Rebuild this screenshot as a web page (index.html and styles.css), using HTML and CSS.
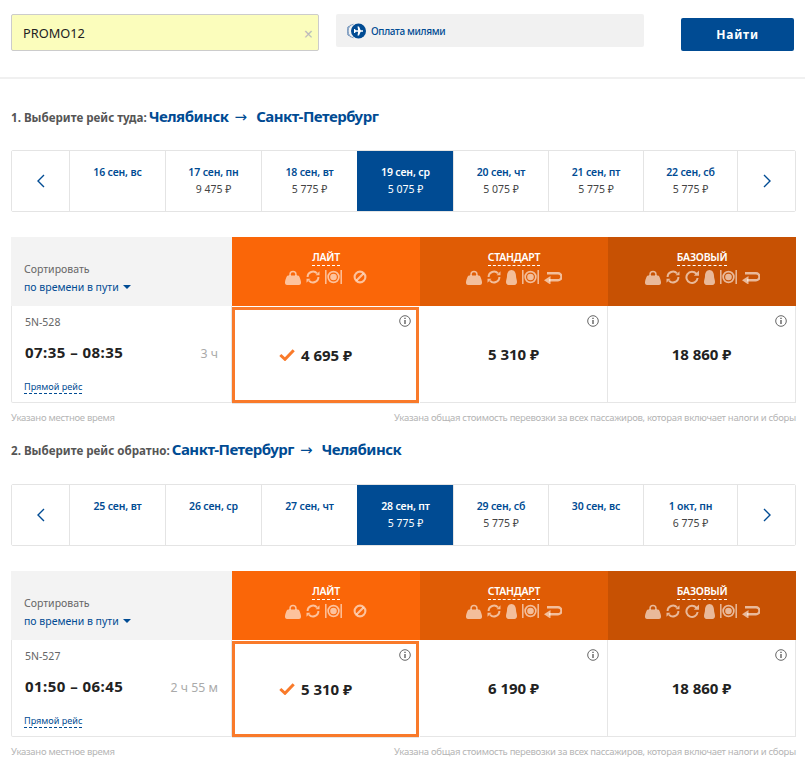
FILE: index.html
```html
<!DOCTYPE html>
<html lang="ru">
<head>
<meta charset="utf-8">
<title>Выбор рейса</title>
<link rel="stylesheet" href="styles.css">
</head>
<body>
<svg class="defs" width="0" height="0" aria-hidden="true">
  <symbol id="bag" viewBox="0 0 16 15"><path d="M4.300 6V4.500a3.700 3.700 0 0 1 7.400 0V6h-1.500V4.500a2.200 2.200 0 0 0-4.400 0V6z" fill="currentColor"/><path d="M3 5.500h10c1.300 0 2.500 3.500 3 6.500 .2 1.500-.5 3-2 3H2c-1.500 0-2.200-1.500-2-3 .5-3 1.700-6.500 3-6.500z" fill="currentColor"/></symbol>
  <symbol id="swap" viewBox="0 0 14 14"><path d="M1.600 7a5.400 5.400 0 0 1 9.400-3.600M12.400 7a5.400 5.400 0 0 1-9.400 3.600" fill="none" stroke="currentColor" stroke-width="2"/><path d="M9.500 5.200H13.500V1.200zM4.500 8.800H.5v4z" fill="currentColor"/></symbol>
  <symbol id="redo" viewBox="0 0 14 14"><path d="M11.300 3.700A5.600 5.600 0 1 0 12.600 8" fill="none" stroke="currentColor" stroke-width="2"/><path d="M8.800 5.800H14V.6z" fill="currentColor"/></symbol>
  <symbol id="meal" viewBox="0 0 17 14"><path d="M8.500 .8a6.200 6.200 0 1 1 0 12.400 6.200 6.200 0 0 1 0-12.400zm0 1.700a4.500 4.500 0 1 0 0 9 4.500 4.500 0 0 0 0-9z" fill="currentColor"/><circle cx="8.500" cy="7" r="3.300" fill="currentColor"/><path d="M.8 0v14M16.200 0v14" stroke="currentColor" stroke-width="1.500"/></symbol>
  <symbol id="none" viewBox="0 0 14 14"><circle cx="7" cy="7" r="5.400" fill="none" stroke="currentColor" stroke-width="2.100"/><path d="M3.500 10.500l7-7" stroke="currentColor" stroke-width="2.100"/></symbol>
  <symbol id="seat" viewBox="0 0 11 15"><path d="M5.500 0c2.900 0 4.500 2.800 4.500 6 0 2.300 1 3.800 1 6 0 1.600-1 3-2.500 3h-6C1 15 0 13.600 0 12c0-2.200 1-3.700 1-6 0-3.200 1.600-6 4.500-6z" fill="currentColor"/></symbol>
  <symbol id="back" viewBox="0 0 18 13"><path d="M5 9.300h9a3.200 3.200 0 0 0 0-7H3" fill="none" stroke="currentColor" stroke-width="2.400"/><path d="M6.500 5v8.600L0 9.300z" fill="currentColor"/></symbol>
  <symbol id="info" viewBox="0 0 12 12"><circle cx="6" cy="6" r="5.300" fill="none" stroke="#666" stroke-width="1"/><path d="M6 5v4M6 2.700v1.300" stroke="#555" stroke-width="1.300"/></symbol>
  <symbol id="check" viewBox="0 0 16 12"><path d="M1.300 6l4.700 4.300L14.700 1.300" fill="none" stroke="#f97a2a" stroke-width="3"/></symbol>
</svg>

<header class="search">
  <div class="promo"><span class="promo-code">PROMO12</span><span class="promo-clear">×</span></div>
  <div class="miles">
    <svg class="miles-icon" viewBox="0 0 19 16" width="19" height="16"><path d="M6.500 1.200a7 7 0 0 0 0 13.600M4 1.800a7 7 0 0 0 0 12.400M1.800 3a7 7 0 0 0 0 10" fill="none" stroke="#7d9cc0" stroke-width="1"/><circle cx="11.500" cy="8" r="7.500" fill="#004b93"/><path d="M7 8h9" stroke="#fff" stroke-width="1.500"/><path d="M10.500 3.500h1.500l2 4.500-2 4.500h-1.500l.8-4.500zM7 6h1l1 2-1 2H7z" fill="#fff"/></svg>
    <span>Оплата милями</span>
  </div>
  <button class="find" type="button">Найти</button>
</header>

<main>
  <section class="leg">
    <h2 class="leg-title"><span class="leg-step">1. Выберите рейс туда:</span> <span class="leg-route">Челябинск<span class="arrow">→</span>Санкт-Петербург</span></h2>
    <div class="dates">
      <button class="nav" type="button"><svg viewBox="0 0 10 16" width="10" height="16"><path d="M8 2L2 8l6 6" fill="none" stroke="#004b93" stroke-width="1.400"/></svg></button>
      <div class="date"><b>16 сен, вс</b></div>
      <div class="date"><b>17 сен, пн</b><span>9 475 ₽</span></div>
      <div class="date"><b>18 сен, вт</b><span>5 775 ₽</span></div>
      <div class="date date-on"><b>19 сен, ср</b><span>5 075 ₽</span></div>
      <div class="date"><b>20 сен, чт</b><span>5 075 ₽</span></div>
      <div class="date"><b>21 сен, пт</b><span>5 775 ₽</span></div>
      <div class="date"><b>22 сен, сб</b><span>5 775 ₽</span></div>
      <button class="nav" type="button"><svg viewBox="0 0 10 16" width="10" height="16"><path d="M2 2l6 6-6 6" fill="none" stroke="#004b93" stroke-width="1.400"/></svg></button>
    </div>
    <div class="fares">
      <div class="sort"><span>Сортировать</span><a>по времени в пути <i class="caret"></i></a></div>
      <div class="tariff t1"><u>ЛАЙТ</u><div class="icons"><svg class="i16"><use href="#bag"/></svg><svg class="i14"><use href="#swap"/></svg><svg class="i17"><use href="#meal"/></svg><svg class="i14 gap"><use href="#none"/></svg></div></div>
      <div class="tariff t2"><u>СТАНДАРТ</u><div class="icons"><svg class="i16"><use href="#bag"/></svg><svg class="i14"><use href="#swap"/></svg><svg class="i11"><use href="#seat"/></svg><svg class="i17"><use href="#meal"/></svg><svg class="i18"><use href="#back"/></svg></div></div>
      <div class="tariff t3"><u>БАЗОВЫЙ</u><div class="icons"><svg class="i16"><use href="#bag"/></svg><svg class="i14"><use href="#swap"/></svg><svg class="i14"><use href="#redo"/></svg><svg class="i11"><use href="#seat"/></svg><svg class="i17"><use href="#meal"/></svg><svg class="i18"><use href="#back"/></svg></div></div>
      <div class="flight">
        <div class="flight-no">5N-528</div>
        <div class="flight-time"><b>07:35 – 08:35</b><span>3 ч</span></div>
        <a class="flight-type">Прямой рейс</a>
      </div>
      <div class="price price-on"><svg class="info"><use href="#info"/></svg><svg class="check"><use href="#check"/></svg><b>4 695 ₽</b></div>
      <div class="price"><svg class="info"><use href="#info"/></svg><b>5 310 ₽</b></div>
      <div class="price"><svg class="info"><use href="#info"/></svg><b>18 860 ₽</b></div>
    </div>
    <div class="notes"><span>Указано местное время</span><span>Указана общая стоимость перевозки за всех пассажиров, которая включает налоги и сборы</span></div>
  </section>

  <section class="leg">
    <h2 class="leg-title"><span class="leg-step">2. Выберите рейс обратно:</span> <span class="leg-route">Санкт-Петербург<span class="arrow">→</span>Челябинск</span></h2>
    <div class="dates">
      <button class="nav" type="button"><svg viewBox="0 0 10 16" width="10" height="16"><path d="M8 2L2 8l6 6" fill="none" stroke="#004b93" stroke-width="1.400"/></svg></button>
      <div class="date"><b>25 сен, вт</b></div>
      <div class="date"><b>26 сен, ср</b></div>
      <div class="date"><b>27 сен, чт</b></div>
      <div class="date date-on"><b>28 сен, пт</b><span>5 775 ₽</span></div>
      <div class="date"><b>29 сен, сб</b><span>5 775 ₽</span></div>
      <div class="date"><b>30 сен, вс</b></div>
      <div class="date"><b>1 окт, пн</b><span>6 775 ₽</span></div>
      <button class="nav" type="button"><svg viewBox="0 0 10 16" width="10" height="16"><path d="M2 2l6 6-6 6" fill="none" stroke="#004b93" stroke-width="1.400"/></svg></button>
    </div>
    <div class="fares">
      <div class="sort"><span>Сортировать</span><a>по времени в пути <i class="caret"></i></a></div>
      <div class="tariff t1"><u>ЛАЙТ</u><div class="icons"><svg class="i16"><use href="#bag"/></svg><svg class="i14"><use href="#swap"/></svg><svg class="i17"><use href="#meal"/></svg><svg class="i14 gap"><use href="#none"/></svg></div></div>
      <div class="tariff t2"><u>СТАНДАРТ</u><div class="icons"><svg class="i16"><use href="#bag"/></svg><svg class="i14"><use href="#swap"/></svg><svg class="i11"><use href="#seat"/></svg><svg class="i17"><use href="#meal"/></svg><svg class="i18"><use href="#back"/></svg></div></div>
      <div class="tariff t3"><u>БАЗОВЫЙ</u><div class="icons"><svg class="i16"><use href="#bag"/></svg><svg class="i14"><use href="#swap"/></svg><svg class="i14"><use href="#redo"/></svg><svg class="i11"><use href="#seat"/></svg><svg class="i17"><use href="#meal"/></svg><svg class="i18"><use href="#back"/></svg></div></div>
      <div class="flight">
        <div class="flight-no">5N-527</div>
        <div class="flight-time"><b>01:50 – 06:45</b><span>2 ч 55 м</span></div>
        <a class="flight-type">Прямой рейс</a>
      </div>
      <div class="price price-on"><svg class="info"><use href="#info"/></svg><svg class="check"><use href="#check"/></svg><b>5 310 ₽</b></div>
      <div class="price"><svg class="info"><use href="#info"/></svg><b>6 190 ₽</b></div>
      <div class="price"><svg class="info"><use href="#info"/></svg><b>18 860 ₽</b></div>
    </div>
    <div class="notes"><span>Указано местное время</span><span>Указана общая стоимость перевозки за всех пассажиров, которая включает налоги и сборы</span></div>
  </section>
</main>
</body>
</html>
```
FILE: styles.css
```css
* { box-sizing: border-box; }
html, body { margin: 0; padding: 0; }
body {
  width: 805px;
  height: 768px;
  overflow: hidden;
  background: #fff;
  color: #222;
  font-family: "Noto Sans", "Open Sans", sans-serif;
  font-size: 12px;
}
.defs { position: absolute; }

.search {
  display: flex;
  align-items: flex-start;
  height: 79px;
  padding: 14px 11px 0;
  border-bottom: 2px solid #f0f0f0;
}
.promo {
  display: flex;
  align-items: center;
  justify-content: space-between;
  width: 308px;
  height: 37px;
  padding: 0 5px 0 11px;
  background: #fbfdbc;
  border: 1px solid #ccc;
  border-radius: 2px;
}
.promo-code { font-size: 12.800px; color: #222; }
.promo-clear { font-size: 16px; line-height: 1; color: #bbb; margin-top: 2px; }
.miles {
  display: flex;
  align-items: center;
  gap: 5px;
  width: 308px;
  height: 33px;
  margin-left: 17px;
  padding-left: 11px;
  background: #f1f1f1;
  border-radius: 2px;
  font-size: 10px;
  font-weight: 500;
  letter-spacing: -.35px;
  color: #004b93;
}
.miles-icon { flex: none; }
.find {
  width: 113px;
  height: 33px;
  margin: 4px 0 0 37px;
  border: 0;
  border-radius: 2px;
  background: #004b93;
  color: #fff;
  font: 700 12px "Noto Sans", sans-serif;
  letter-spacing: .8px;
}

.leg { padding: 0 9px 0 11px; }
.leg-title {
  display: flex;
  align-items: baseline;
  gap: 2px;
  height: 71px;
  margin: 0;
  padding-top: 27px;
  font-weight: 400;
}
main > .leg:last-child .leg-title { height: 36px; padding-top: 0; margin-top: 12px; }
main > .leg:last-child .dates { margin-top: 9px; }
.leg-step { font-size: 11.600px; font-weight: 700; color: #555; }
.leg-route { font-size: 15px; font-weight: 700; letter-spacing: -.5px; color: #004b93; white-space: nowrap; }
.arrow { margin: 0 9px 0 6px; font-family: "DejaVu Sans", sans-serif; font-weight: 400; letter-spacing: 0; }

.dates {
  display: flex;
  height: 62px;
  border: 1px solid #e4e4e4;
  border-radius: 2px;
}
.nav {
  flex: 1 1 0;
  display: flex;
  align-items: center;
  justify-content: center;
  padding: 0;
  border: 0;
  background: #fff;
}
.nav:first-child { flex: 0 0 57px; }
.date {
  flex: 0 0 96px;
  display: flex;
  flex-direction: column;
  align-items: center;
  gap: 3px;
  padding-top: 14px;
  border-left: 1px solid #e4e4e4;
  font-size: 10.500px;
  color: #444;
}
.date:nth-child(n+6) { flex-basis: 95px; }
.date:nth-child(8) { flex-basis: 94px; }
.date + .nav { border-left: 1px solid #e4e4e4; }
.date b { font-weight: 600; letter-spacing: -.15px; color: #004b93; }
.date-on { background: #004b93; border-color: #004b93; color: #fff; }
.date-on b { color: #fff; }

.fares {
  display: grid;
  grid-template-columns: 221px 188px 188px 188px;
  grid-template-rows: 69px 97px;
  margin-top: 25px;
  border-radius: 2px;
}
.sort {
  display: flex;
  flex-direction: column;
  justify-content: flex-end;
  gap: 4px;
  padding: 0 0 12px 13px;
  background: #f3f3f3;
  font-size: 10.500px;
  color: #666;
}
.sort a { color: #004b93; }
.caret {
  display: inline-block;
  margin-left: 2px;
  vertical-align: 2px;
  border: 4px solid transparent;
  border-top-color: #004b93;
  border-bottom: 0;
}
.tariff {
  display: flex;
  flex-direction: column;
  align-items: center;
  padding-top: 12px;
  color: #fff;
  font-size: 10.500px;
  font-weight: 600;
  letter-spacing: -.25px;
}
.tariff u {
  line-height: 16px;
  text-decoration: none;
  border-bottom: 1px dashed #fff;
}
.t1 { background: #fa6608; }
.t2 { background: #e05c05; }
.t3 { background: #c75103; }
.icons { display: flex; align-items: center; gap: 5px; height: 16px; margin-top: 3px; color: rgba(255,255,255,.6); }
.i16 { width: 16px; height: 15px; }
.i17 { width: 17px; height: 14px; }
.i14 { width: 14px; height: 14px; }
.i11 { width: 11px; height: 15px; }
.i18 { width: 18px; height: 13px; }
.gap { margin-left: 6px; }
.flight {
  padding: 9px 13px 0 13px;
  border: 1px solid #e6e6e6;
  border-top: 0;
  border-radius: 0 0 0 2px;
}
.flight-no { font-size: 10.500px; line-height: 14px; color: #666; }
.flight-time {
  display: flex;
  align-items: baseline;
  justify-content: space-between;
  margin-top: 13px;
  font-size: 15px;
  line-height: 20px;
}
.flight-time span { font-size: 12.300px; color: #aaa; }
.flight-time b { font-weight: 700; letter-spacing: .45px; color: #222; }
.flight-type {
  display: inline-block;
  margin: 17px 0 0 -1px;
  font-size: 9.100px;
  line-height: 12px;
  color: #004b93;
  border-bottom: 1px dashed #004b93;
}
.price {
  position: relative;
  display: flex;
  align-items: center;
  justify-content: center;
  gap: 6px;
  border-right: 1px solid #e6e6e6;
  border-bottom: 1px solid #e6e6e6;
  font-size: 15px;
}
.price b { font-weight: 700; color: #222; }
.price-on {
  padding-right: 20px;
  border: 3px solid #f97a2a;
  margin-top: 1px;
  margin-right: 1px;
  box-shadow: 0 1px 0 #e6e6e6;
}
.info { position: absolute; top: 9px; right: 8px; width: 12px; height: 12px; }
.price-on .info { top: 5px; right: 5px; }
.check { width: 16px; height: 12px; }

.notes {
  display: flex;
  justify-content: space-between;
  padding-top: 8px;
  height: 24px;
  font-size: 9.500px;
  letter-spacing: -.29px;
  color: #b5b5b5;
}
```
